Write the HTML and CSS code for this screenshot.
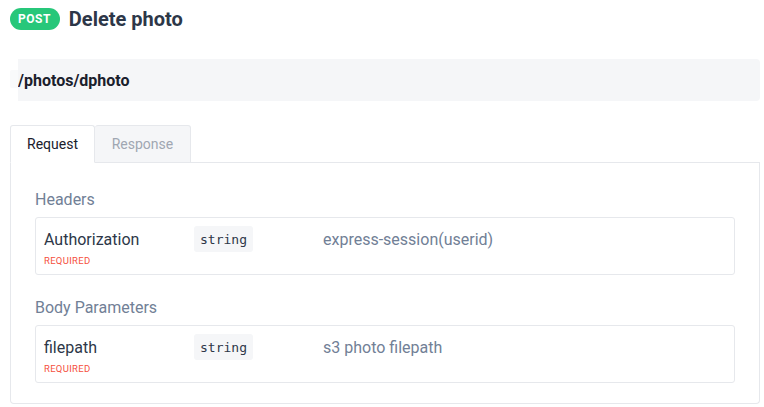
FILE: index.html
```html
<!DOCTYPE html>
<html>
<head>
<meta charset="utf-8">
<link rel="stylesheet" href="styles.css">
</head>
<body>
<div class="page">
  <div class="title">
    <span class="badge">POST</span>
    <h1>Delete photo</h1>
  </div>
  <div class="path"><span class="path-pre"></span><code>/photos/dphoto</code></div>
  <div class="tabs">
    <div class="tab active">Request</div>
    <div class="tab">Response</div>
    <div class="tab-fill"></div>
  </div>
  <div class="panel">
    <div class="section-title">Headers</div>
    <div class="param">
      <div class="pname">
        <div class="name">Authorization</div>
        <div class="req">REQUIRED</div>
      </div>
      <div class="ptype"><span class="code">string</span></div>
      <div class="pdesc">express-session(userid)</div>
    </div>
    <div class="section-title">Body Parameters</div>
    <div class="param">
      <div class="pname">
        <div class="name">filepath</div>
        <div class="req">REQUIRED</div>
      </div>
      <div class="ptype"><span class="code">string</span></div>
      <div class="pdesc">s3 photo filepath</div>
    </div>
  </div>
</div>
</body>
</html>
```

FILE: styles.css
```css
* { box-sizing: border-box; }
html, body { margin: 0; padding: 0; background: #fff; }
body { font-family: Roboto, "Liberation Sans", sans-serif; color: #2d3748; }
.page { padding: 0 4px 0 10px; }
.title { display: flex; align-items: center; height: 39px; padding-bottom: 1px; }
.badge {
  background: #27c77a; color: #fff; font-weight: 700; font-size: 12px;
  letter-spacing: 0.5px; border-radius: 12px; height: 22px; line-height: 22px;
  padding: 0 9px 0 8px; margin-right: 9px;
}
h1 { margin: 0; font-size: 20px; font-weight: 700; color: #2d3748; }
.path {
  margin-top: 20px; margin-left: 8px; height: 42px; background: #f5f6f8;
  border-radius: 0 4px 4px 0; display: flex; align-items: center; position: relative;
}
.path-pre { position: absolute; left: -8px; top: 11px; width: 8px; height: 18px; background: #f9fafb; border-radius: 2px 0 0 2px; }
.path code { font-family: Roboto, "Liberation Sans", sans-serif; font-weight: 700; font-size: 16px; color: #1a202c; }
.tabs { display: flex; margin-top: 24px; height: 38px; }
.tab {
  font-size: 14px; padding: 0 16px; line-height: 37px; border: 1px solid #e6e8ec;
  border-bottom: 1px solid #e6e8ec; background: #f5f6f8; color: #a0a7b2;
  border-radius: 3px 3px 0 0;
}
.tab.active { background: #fff; color: #1a202c; border-bottom-color: #fff; width: 85px; }
.tab:not(.active) { border-left: none; width: 96px; text-align: center; }
.tab-fill { flex: 1; border-bottom: 1px solid #e6e8ec; }
.panel {
  border: 1px solid #e6e8ec; border-top: none; border-radius: 0 0 4px 4px;
  padding: 24px 24px 20px 24px;
}
.section-title { font-size: 16px; color: #718096; line-height: 26px; margin-bottom: 4px; }
.param {
  border: 1px solid #e6e8ec; border-radius: 3px; height: 58px;
  display: flex; padding: 8px 8px 0 8px; margin-bottom: 20px;
}
.param:last-child { margin-bottom: 0; }
.pname { width: 150px; }
.name { font-size: 16px; color: #2d3748; line-height: 27px; }
.req { font-size: 9.5px; color: #f5503e; margin-top: 2px; letter-spacing: 0.3px; }
.ptype { width: 129px; }
.code {
  display: inline-block; font-family: "DejaVu Sans Mono", monospace; font-size: 13px;
  background: #f5f6f8; color: #2d3748; padding: 0 6px; height: 26px; line-height: 27px; border-radius: 3px;
}
.pdesc { font-size: 16px; color: #718096; line-height: 27px; }
```
